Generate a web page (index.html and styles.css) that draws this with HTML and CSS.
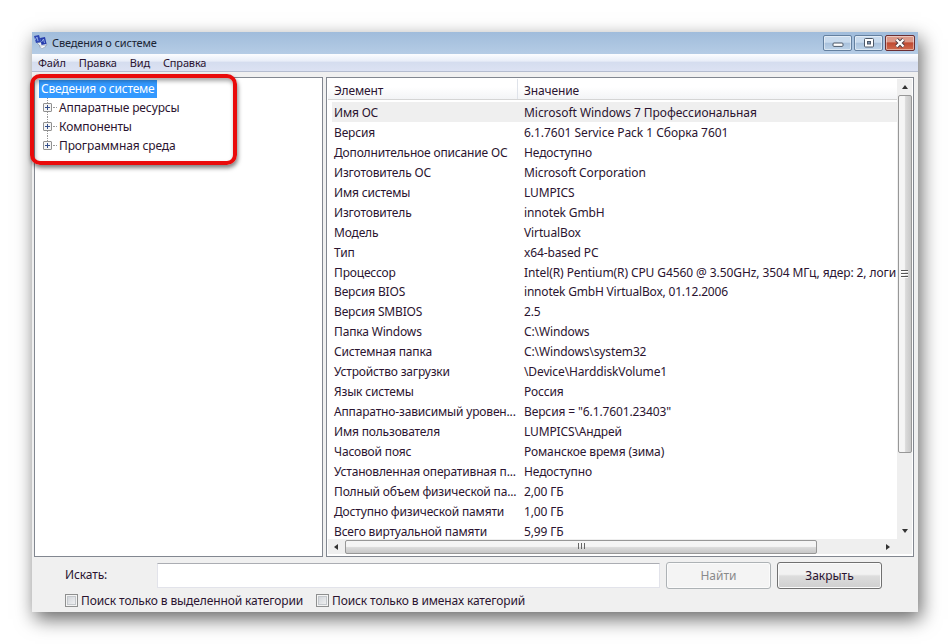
FILE: index.html
```html
<!DOCTYPE html>
<html lang="ru">
<head>
  <meta charset="UTF-8">
  <title>Сведения о системе</title>
  <link rel="stylesheet" href="styles.css">
</head>
<body>

  <div class="window">
    <div class="titlebar">
      <svg class="app-icon" width="14" height="14" viewBox="0 0 14 14">
        <path d="M3 8l8-2 2 4-5 3z" fill="#e8eef5" stroke="#8795a8" stroke-width=".7"/>
        <path d="M0 1l5-1 2 7-5 1z" fill="#3048b4"/>
        <path d="M6 3l5-1 1.500 7-5 1z" fill="#263cac"/>
        <path d="M1 5l2-3 1 4M7.500 7l2-3 1 4" fill="none" stroke="#a9c2f0" stroke-width=".8"/>
        <path d="M5 11.500l5-1 2 1-4 2z" fill="#fff" stroke="#8795a8" stroke-width=".5"/>
      </svg>
      <span class="title">Сведения о системе</span>
      <div class="controls">
        <button class="control">
          <svg width="12" height="8" viewBox="0 0 12 8"><rect x="1" y="4" width="10" height="3.4" rx="1" fill="#fff" stroke="#4c5868"/></svg>
        </button>
        <button class="control">
          <svg width="12" height="10" viewBox="0 0 12 10"><rect x="1.5" y=".5" width="9" height="8.5" rx="1" fill="#fff" stroke="#4c5868"/><rect x="4.5" y="3.5" width="3" height="2.5" fill="#7e94b0" stroke="#4c5868"/></svg>
        </button>
        <button class="control close">
          <svg width="12" height="10" viewBox="0 0 12 10"><path d="M2.5 1.5l7 7M9.5 1.5l-7 7" stroke="#4b3a42" stroke-width="4"/><path d="M2.5 1.5l7 7M9.5 1.5l-7 7" stroke="#fff" stroke-width="2.3"/></svg>
        </button>
      </div>
    </div>

    <div class="menu">
      <span>Файл</span>
      <span>Правка</span>
      <span>Вид</span>
      <span>Справка</span>
    </div>

    <div class="panes">
      <div class="tree">
        <div class="root"><span>Сведения о системе</span></div>
        <div class="node"><i class="plus"></i><span>Аппаратные ресурсы</span></div>
        <div class="node"><i class="plus"></i><span>Компоненты</span></div>
        <div class="node"><i class="plus"></i><span>Программная среда</span></div>
        <div class="highlight"></div>
      </div>

      <div class="details">
        <div class="list">
          <div class="head"><span>Элемент</span><span>Значение</span></div>
          <div class="rows" id="rows"></div>
        </div>
        <div class="vscroll">
          <i class="arrow up"></i>
          <div class="vthumb"><i></i><i></i><i></i></div>
          <i class="arrow down"></i>
        </div>
        <div class="hscroll">
          <i class="arrow left"></i>
          <div class="hthumb"><i></i><i></i><i></i></div>
          <i class="arrow right"></i>
        </div>
      </div>
    </div>

    <div class="search">
      <label for="query">Искать:</label>
      <input type="text" id="query">
      <button class="btn" disabled>Найти</button>
      <button class="btn">Закрыть</button>
    </div>
    <div class="options">
      <i class="check"></i><span class="in-category">Поиск только в выделенной категории</span>
      <i class="check"></i><span>Поиск только в именах категорий</span>
    </div>
  </div>

  <script src="script.js"></script>
</body>
</html>
```
FILE: styles.css
```css
body {
  margin: 0;
  padding: 32px;
  height: 580px;
  background: #fff;
  overflow: hidden;
  font-family: "Noto Sans", "Open Sans", sans-serif;
  font-size: 12px;
  letter-spacing: -0.12px;
  color: #2b1430;
  white-space: nowrap;
}
.window {
  width: 886px;
  height: 580px;
  background: #f0f0f0;
  box-shadow: 3px 7px 18px rgba(0, 0, 0, 0.6);
}
.titlebar {
  display: flex;
  align-items: center;
  height: 22px;
  background: linear-gradient(#a0bcdb, #b5cce5);
}
.app-icon {
  margin: -2px 4px 0 2px;
}
.title {
  margin-top: -2px;
  font-size: 11px;
  letter-spacing: -0.15px;
  color: #1b2535;
}
.controls {
  display: flex;
  gap: 2px;
  margin: 0 3px 0 auto;
}
.control {
  display: flex;
  align-items: center;
  justify-content: center;
  box-sizing: border-box;
  width: 29px;
  height: 16px;
  padding: 0;
  border: 1px solid #64809f;
  border-radius: 2px;
  background: linear-gradient(#c9dbee 45%, #a8c1dc 50%, #bdd3e9);
  box-shadow: inset 0 0 0 1px rgba(255, 255, 255, 0.45);
}
.close {
  width: 30px;
  border-color: #6b2e32;
  background: linear-gradient(#dc9989 40%, #c04a32 50%, #cf6a4e);
}
.menu {
  display: flex;
  align-items: center;
  height: 17px;
  padding-left: 6px;
  border-bottom: 1px solid #b5bdd0;
  background: linear-gradient(#fcfdff 0%, #e9eef8 40%, #d5ddef 50%, #dce2f3);
  font-size: 11px;
  letter-spacing: -0.15px;
}
.menu span {
  margin: -1px 13px 0 0;
}
.panes {
  display: flex;
  gap: 3px;
  padding: 5px 3px 0 2px;
}
.tree {
  position: relative;
  box-sizing: border-box;
  width: 289px;
  height: 480px;
  padding: 2px 0 0 4px;
  border: 1px solid #828790;
  background: #fff;
}
.root {
  height: 18px;
}
.root span {
  display: inline-block;
  height: 18px;
  padding: 0 2px;
  line-height: 17px;
  letter-spacing: -0.2px;
  background: #3399ff;
  color: #fff;
}
.node {
  display: flex;
  align-items: center;
  height: 19px;
  margin-left: 4px;
  background: repeating-linear-gradient(#999 0 1px, transparent 1px 2px) 4px 0 / 1px 100% no-repeat;
}
.node:nth-child(4) {
  background-size: 1px 50%;
}
.node span {
  letter-spacing: -0.12px;
}
.plus {
  box-sizing: border-box;
  width: 9px;
  height: 9px;
  border: 1px solid #919191;
  border-radius: 1px;
  background:
    linear-gradient(#35508c, #35508c) center / 5px 1px no-repeat,
    linear-gradient(#35508c, #35508c) center / 1px 5px no-repeat,
    #f5f5f5;
}
.plus::after {
  content: "";
  display: block;
  width: 4px;
  margin: 3px 0 0 9px;
  border-top: 1px dotted #999;
}
.node .plus {
  margin-right: 7px;
}
.highlight {
  position: absolute;
  left: -5px;
  top: -4px;
  box-sizing: border-box;
  width: 207px;
  height: 91px;
  border: 4px solid #e90b0b;
  border-radius: 10px;
  box-shadow: 1px 3px 4px rgba(0, 0, 0, 0.5), inset 1px 3px 4px rgba(0, 0, 0, 0.35);
}
.details {
  display: grid;
  grid-template-columns: 569px 15px;
  grid-template-rows: 460px 15px;
  box-sizing: border-box;
  width: 588px;
  height: 480px;
  padding: 1px 0 0 1px;
  border: 1px solid #828790;
  background: #fff;
}
.list {
  overflow: hidden;
}
.head {
  display: flex;
  height: 20px;
  line-height: 23px;
  border-bottom: 1px solid #d5d5d5;
  background: linear-gradient(#fff 40%, #f3f4f6);
}
.head span {
  box-sizing: border-box;
  width: 190px;
  padding-left: 6px;
  border-right: 1px solid #dfe3ea;
}
.head span:last-child {
  flex: 1;
  border: none;
}
.rows {
  padding-top: 2px;
}
.row {
  display: flex;
  height: 19.95px;
  line-height: 21px;
  margin-left: 4px;
  padding-left: 2px;
}
.row:first-child {
  background: #efefef;
}
.row span:first-child {
  flex: 0 0 190px;
  letter-spacing: -0.17px;
}
.row:nth-child(-n+2) span:last-child {
  letter-spacing: -0.04px;
}
.row:nth-child(9) span:last-child {
  letter-spacing: -0.09px;
}
.row:nth-child(10) span:last-child {
  letter-spacing: -0.2px;
}
.vscroll {
  display: flex;
  flex-direction: column;
  align-items: center;
  background: #efefef;
}
.vthumb, .hthumb {
  display: flex;
  align-items: center;
  justify-content: center;
  box-sizing: border-box;
  border: 1px solid #979797;
  border-radius: 2px;
}
.vthumb {
  flex-direction: column;
  gap: 1px;
  width: 14px;
  height: 358px;
  margin-top: 6px;
  background: linear-gradient(90deg, #f5f5f5 45%, #dadada 55%, #c8c8c8);
}
.hthumb {
  gap: 2px;
  width: 472px;
  height: 14px;
  margin-left: 7px;
  background: linear-gradient(#f5f5f5 45%, #dadada 55%, #c8c8c8);
}
.vthumb i {
  width: 7px;
  height: 2px;
  background: linear-gradient(#555 50%, #fff 50%);
}
.hthumb i {
  width: 1px;
  height: 6px;
  margin-top: -2px;
  background: #666;
}
.hscroll {
  display: flex;
  align-items: center;
  grid-column: 1 / 3;
  background: #efefef;
}
.arrow {
  border: 3px solid transparent;
}
.up {
  margin-top: 6px;
  border-top: 0;
  border-bottom: 4px solid #333;
}
.down {
  margin: auto 0 6px;
  border-bottom: 0;
  border-top: 4px solid #333;
}
.left {
  margin-left: 6px;
  border-left: 0;
  border-right: 4px solid #333;
}
.right {
  margin-left: 69px;
  border-right: 0;
  border-left: 4px solid #333;
}
.search {
  display: flex;
  align-items: center;
  height: 26px;
  margin-top: 6px;
  padding-left: 33px;
}
.search label {
  width: 92px;
  margin-top: -3px;
}
.search input {
  box-sizing: border-box;
  width: 503px;
  height: 25px;
  padding: 0;
  margin: -2px 6px 0 0;
  border: 1px solid #e2e3ea;
  border-top-color: #abadb3;
  background: #fff;
}
.btn {
  width: 105px;
  height: 27px;
  padding: 0;
  margin: -1px 6px 0 0;
  border: 1px solid #707070;
  border-radius: 3px;
  background: linear-gradient(#f2f2f2 45%, #dddddd 52%, #cfcfcf);
  box-shadow: inset 0 0 0 1px #fbfbfb;
  color: #2b1430;
  font: inherit;
}
.btn:disabled {
  border-color: #adb2b5;
  background: #f4f4f4;
  color: #8a8a8a;
}
.options {
  display: flex;
  align-items: center;
  height: 20px;
  margin-top: 1px;
  padding-left: 33px;
}
.check {
  box-sizing: border-box;
  width: 13px;
  height: 13px;
  margin-right: 3px;
  border: 1px solid #8e8f8f;
  background: linear-gradient(135deg, #cbcfd5, #f6f6f6);
  box-shadow: inset 0 0 0 1px #f4f4f4, inset 0 0 0 2px #c4c8cc;
}
.in-category {
  width: 235px;
}
```
FILE: script.js
```js
const items = [
  ["Имя ОС", "Microsoft Windows 7 Профессиональная"],
  ["Версия", "6.1.7601 Service Pack 1 Сборка 7601"],
  ["Дополнительное описание ОС", "Недоступно"],
  ["Изготовитель ОС", "Microsoft Corporation"],
  ["Имя системы", "LUMPICS"],
  ["Изготовитель", "innotek GmbH"],
  ["Модель", "VirtualBox"],
  ["Тип", "x64-based PC"],
  ["Процессор", "Intel(R) Pentium(R) CPU G4560 @ 3.50GHz, 3504 МГц, ядер: 2, логи"],
  ["Версия BIOS", "innotek GmbH VirtualBox, 01.12.2006"],
  ["Версия SMBIOS", "2.5"],
  ["Папка Windows", "C:\\Windows"],
  ["Системная папка", "C:\\Windows\\system32"],
  ["Устройство загрузки", "\\Device\\HarddiskVolume1"],
  ["Язык системы", "Россия"],
  ["Аппаратно-зависимый уровен...", "Версия = \"6.1.7601.23403\""],
  ["Имя пользователя", "LUMPICS\\Андрей"],
  ["Часовой пояс", "Романское время (зима)"],
  ["Установленная оперативная п...", "Недоступно"],
  ["Полный объем физической па...", "2,00 ГБ"],
  ["Доступно физической памяти", "1,00 ГБ"],
  ["Всего виртуальной памяти", "5,99 ГБ"]
];

const rows = document.getElementById("rows");
items.forEach(item => {
  const row = document.createElement("div");
  row.className = "row";
  item.forEach(text => {
    const cell = document.createElement("span");
    cell.textContent = text;
    row.appendChild(cell);
  });
  rows.appendChild(row);
});
```
